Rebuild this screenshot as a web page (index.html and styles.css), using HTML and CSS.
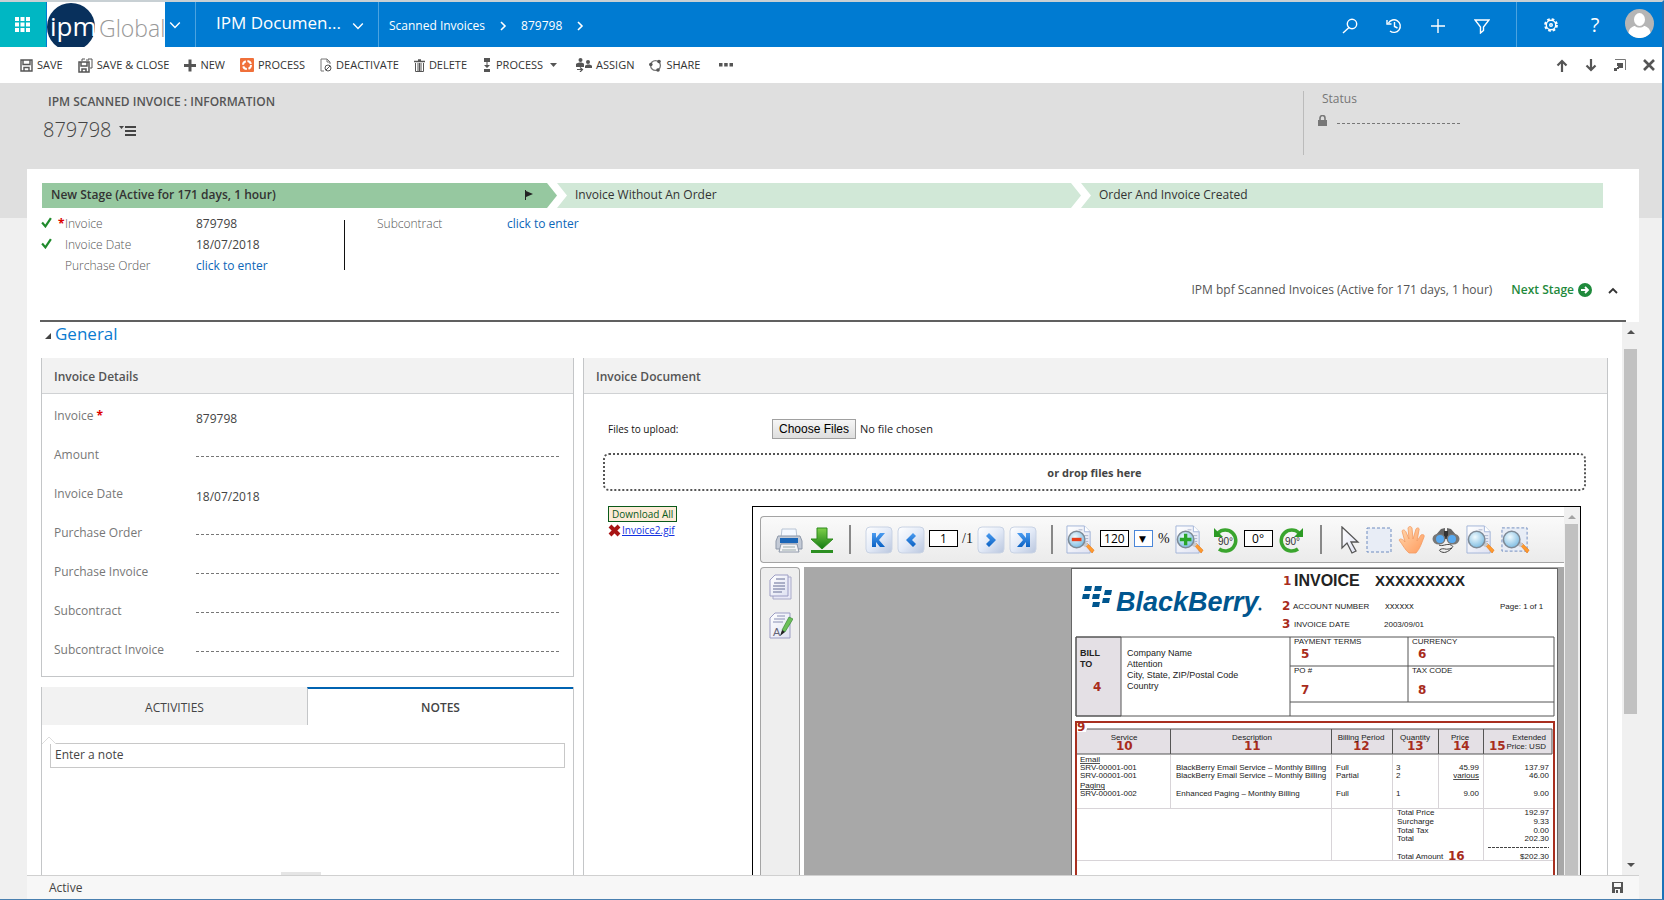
FILE: index.html
```html
<!DOCTYPE html>
<html lang="en">
<head>
<meta charset="utf-8">
<title>IPM Scanned Invoice: 879798</title>
<link rel="stylesheet" href="styles.css">
</head>
<body>
<svg class="defs" aria-hidden="true">
  <defs>
    <linearGradient id="gBtn" x1="0" y1="0" x2="1" y2="1"><stop offset="0" stop-color="#fff"/><stop offset=".5" stop-color="#e3eaf7"/><stop offset="1" stop-color="#b9c6de"/></linearGradient>
    <linearGradient id="gBlue" x1="0" y1="0" x2="0" y2="1"><stop offset="0" stop-color="#4a9bf0"/><stop offset="1" stop-color="#0b62c4"/></linearGradient>
    <linearGradient id="gGreen" x1="0" y1="0" x2="0" y2="1"><stop offset="0" stop-color="#7fd04a"/><stop offset="1" stop-color="#137a13"/></linearGradient>
    <linearGradient id="gPaper" x1="0" y1="0" x2="1" y2="1"><stop offset="0" stop-color="#fff"/><stop offset="1" stop-color="#dfe2f2"/></linearGradient>
    <radialGradient id="gLens" cx=".4" cy=".35" r=".7"><stop offset="0" stop-color="#f0fbff"/><stop offset="1" stop-color="#79b9e0"/></radialGradient>
    <linearGradient id="gHand" x1="0" y1="0" x2="1" y2="1"><stop offset="0" stop-color="#ffd9b0"/><stop offset="1" stop-color="#ff9a5c"/></linearGradient>
    <symbol id="chev-down" viewBox="0 0 10 10"><path d="M1 3l4 4 4-4" fill="none" stroke="currentColor" stroke-width="1.2"/></symbol>
    <symbol id="chev-right" viewBox="0 0 10 10"><path d="M3 1l4 4-4 4" fill="none" stroke="currentColor" stroke-width="1.6"/></symbol>
    <symbol id="navbox" viewBox="0 0 28 28"><rect x="1" y="1" width="26" height="26" rx="4" fill="url(#gBtn)" stroke="#c9d3e4"/></symbol>
    <symbol id="page" viewBox="0 0 30 30"><path d="M1 1h18l6 6v22H1z" fill="url(#gPaper)" stroke="#a3b4d8"/><path d="M19 1v6h6" fill="#fff" stroke="#a3b4d8"/><path d="M13 5h4M19 11h4M20 14h3M20 17h3" stroke="#aab4cc"/></symbol>
    <symbol id="lens" viewBox="0 0 30 30"><path d="M20 21l2-2 7 7-2 3z" fill="#ff9a2e" stroke="#e07010" stroke-width=".6"/><path d="M16 20l4 3 3-3-4-4z" fill="#c8c8cc"/><circle cx="11" cy="15" r="8.5" fill="url(#gLens)" stroke="#7e8a96" stroke-width="1.6"/></symbol>
    <symbol id="check" viewBox="0 0 10 10"><path d="M1 5l3 3.500 5-7.500" fill="none" stroke="#1f8a2c" stroke-width="2"/></symbol>
  </defs>
</svg>

<header class="topbar">
  <button class="waffle" aria-label="Apps"><svg width="15" height="15" viewBox="0 0 15 15"><path d="M0 0h4v4H0zM5.500 0h4v4h-4zM11 0h4v4h-4zM0 5.500h4v4H0zM5.500 5.500h4v4h-4zM11 5.500h4v4h-4zM0 11h4v4H0zM5.500 11h4v4h-4zM11 11h4v4h-4z" fill="#fff"/></svg></button>
  <div class="logo">
    <svg width="118" height="45" viewBox="0 0 118 45" role="img" aria-label="ipm Global">
      <circle cx="24" cy="25" r="24" fill="#08305c"/>
      <text x="3" y="34" class="logo-ipm">ipm</text>
      <text x="52" y="35" class="logo-global">Global</text>
    </svg>
  </div>
  <button class="logo-menu" aria-label="Switch"><svg width="12" height="12"><use href="#chev-down"/></svg></button>
  <button class="area">IPM Documen...<svg width="12" height="12"><use href="#chev-down"/></svg></button>
  <nav class="crumbs">
    <a href="#">Scanned Invoices</a><svg width="10" height="10"><use href="#chev-right"/></svg>
    <a href="#">879798</a><svg width="10" height="10"><use href="#chev-right"/></svg>
  </nav>
  <div class="tools">
    <button aria-label="Search"><svg width="16" height="16" viewBox="0 0 16 16"><circle cx="10" cy="6" r="4.700"/><path d="M7 9.500L1 15"/></svg></button>
    <button aria-label="Recent"><svg width="16" height="16" viewBox="0 0 16 16"><path d="M2.500 5A6.300 6.300 0 1 1 4 13M1 2v4h4.500M8.500 4v4.500l3 1.500"/></svg></button>
    <button aria-label="New"><svg width="16" height="16" viewBox="0 0 16 16"><path d="M8 1v14M1 8h14"/></svg></button>
    <button aria-label="Advanced find"><svg width="16" height="16" viewBox="0 0 16 16"><path d="M1 2h14l-5.500 7v3.500L6.500 15V9z"/></svg></button>
  </div>
  <div class="tools user">
    <button aria-label="Settings"><svg width="16" height="16" viewBox="0 0 16 16"><circle cx="8" cy="8" r="5.800" stroke-width="2.200" stroke-dasharray="2.600 1.955"/><circle cx="8" cy="8" r="4.700"/><circle cx="8" cy="8" r="1.300"/></svg></button>
    <button class="help" aria-label="Help">?</button>
    <button aria-label="Account"><svg class="avatar" width="29" height="29" viewBox="0 0 29 29"><circle cx="14.500" cy="14.500" r="14.500" fill="#b5b5b5"/><ellipse cx="14.500" cy="10.500" rx="5.500" ry="6.500" fill="#fff"/><path d="M3.500 24C4 19 8 17 10 17c2 2 7 2 9 0 2 0 6 2 6.500 7a14.500 14.500 0 0 1-22 0z" fill="#fff"/></svg></button>
  </div>
</header>

<div class="cmdbar">
  <button><svg width="13" height="13" viewBox="0 0 13 13"><path d="M1 1h11v11H1zM3 1v4.500h7V1M4 12V8.500h5V12" fill="none" stroke="#555" stroke-width="1.400"/></svg>SAVE</button>
  <button><svg width="15" height="15" viewBox="0 0 15 15"><path d="M1 4h10v10H1zM3 4v4h6V4M4 14v-3h4v3" fill="none" stroke="#555" stroke-width="1.500"/><path d="M4 3V1h3M10 1h4v9h-2M8 2h3" fill="none" stroke="#555"/></svg>SAVE &amp; CLOSE</button>
  <button><svg width="12" height="13" viewBox="0 0 12 12"><path d="M6 0v12M0 6h12" stroke="#555" stroke-width="3"/></svg>NEW</button>
  <button><svg width="14" height="14" viewBox="0 0 14 14"><rect width="14" height="14" rx="1" fill="#f0703a"/><circle cx="7" cy="7" r="4" fill="none" stroke="#fff" stroke-width="2" stroke-dasharray="4.600 1.680"/></svg>PROCESS</button>
  <button><svg width="12" height="14" viewBox="0 0 12 14"><path d="M4 13H1V1h6l3 3v2M7 1v3h3" fill="none" stroke="#777"/><circle cx="8" cy="10" r="3" fill="none" stroke="#555"/><path d="M6 12l4-4" stroke="#555"/></svg>DEACTIVATE</button>
  <button><svg width="11" height="13" viewBox="0 0 11 13"><path d="M0 2.500h11M4 1h3" stroke="#555" stroke-width="1.500"/><path d="M1.500 4v8.500h8V4M4 4v8M5.500 4v8M7 4v8" fill="none" stroke="#555"/></svg>DELETE</button>
  <button><svg width="10" height="14" viewBox="0 0 10 14"><path d="M2 0h6v4H2zM2 11h6v3H2zM4.500 4h1v3h-1zM2 7h6L5 10z" fill="#555"/></svg>PROCESS<svg class="caret" width="7" height="4" viewBox="0 0 7 4"><path d="M0 0h7L3.500 4z" fill="#555"/></svg></button>
  <button><svg width="16" height="14" viewBox="0 0 16 14"><circle cx="4.500" cy="2" r="2" fill="#555"/><path d="M0 9V6c2-2 7-2 8 0v3z" fill="#555"/><circle cx="12" cy="4" r="2" fill="#555"/><path d="M9 10V8c1-2 6-2 7 0v2z" fill="#555"/><path d="M1 11.500h5M4 9.500l2.500 2L4 14" fill="none" stroke="#555" stroke-width="1.200"/></svg>ASSIGN</button>
  <button><svg width="13" height="13" viewBox="0 0 13 13"><circle cx="6.500" cy="6.500" r="4.900" fill="none" stroke="#777" stroke-width="1.300"/><circle cx="10" cy="2.500" r="1.800" fill="#555"/><circle cx="1.800" cy="5.500" r="1.800" fill="#555"/><circle cx="9" cy="11" r="1.800" fill="#555"/></svg>SHARE</button>
  <button class="more" aria-label="More"><svg width="14" height="4" viewBox="0 0 14 4"><path d="M0 0h3.500v3.500H0zM5.200 0h3.500v3.500H5.200zM10.500 0H14v3.500h-3.500z" fill="#555"/></svg></button>
  <div class="cmd-right">
    <button aria-label="Up"><svg width="12" height="13" viewBox="0 0 12 13"><path d="M6 13V2M1.500 6.500L6 2l4.500 4.500" fill="none" stroke="#555" stroke-width="2.200"/></svg></button>
    <button aria-label="Down"><svg width="12" height="13" viewBox="0 0 12 13"><path d="M6 0v11M1.500 6.500L6 11l4.500-4.500" fill="none" stroke="#555" stroke-width="2.200"/></svg></button>
    <button aria-label="Pop out"><svg width="12" height="12" viewBox="0 0 12 12"><path d="M1 .5h10.500V11" fill="none" stroke="#777"/><path d="M3 4h6v5H4V7H3zM0 9h3v3H0zM3 8h2v2H3z" fill="#555"/></svg></button>
    <button aria-label="Close"><svg width="12" height="12" viewBox="0 0 12 12"><path d="M1 1l10 10M11 1L1 11" stroke="#555" stroke-width="2.600"/></svg></button>
  </div>
</div>

<main class="stage-area">
  <div class="record">
    <div class="record-title">
      <p>IPM SCANNED INVOICE : INFORMATION</p>
      <h1>879798 <svg width="17" height="10" viewBox="0 0 17 10"><path d="M0 0h5L2.500 3zM6 0h11v2H6zM6 4h11v2H6zM6 8h11v2H6z" fill="#444"/></svg></h1>
    </div>
    <div class="record-status">
      <span>Status</span>
      <div><svg width="9" height="11" viewBox="0 0 9 11"><path d="M0 5h9v6H0z" fill="#777"/><path d="M2 5V3a2.500 2.500 0 0 1 5 0v2" fill="none" stroke="#777" stroke-width="1.600"/></svg><i class="dash"></i></div>
    </div>
  </div>

  <div class="panel">
    <section class="process">
      <ol class="stages">
        <li class="first">New Stage (Active for 171 days, 1 hour)<svg width="8" height="10" viewBox="0 0 8 10"><path d="M.5 0v10" stroke="#222"/><path d="M1 1l7 3-7 3z" fill="#222"/></svg></li>
        <li>Invoice Without An Order</li>
        <li class="last">Order And Invoice Created</li>
      </ol>
      <div class="steps">
        <dl>
          <dt><svg width="11" height="11"><use href="#check"/></svg><b>*</b>Invoice</dt><dd>879798</dd>
          <dt><svg width="11" height="11"><use href="#check"/></svg><b></b>Invoice Date</dt><dd>18/07/2018</dd>
          <dt><span></span><b></b>Purchase Order</dt><dd><a href="#">click to enter</a></dd>
        </dl>
        <dl class="second"><dt>Subcontract</dt><dd><a href="#">click to enter</a></dd></dl>
      </div>
      <div class="process-foot">
        <span>IPM bpf Scanned Invoices (Active for 171 days, 1 hour)</span>
        <button class="next">Next Stage<svg width="14" height="14" viewBox="0 0 14 14"><circle cx="7" cy="7" r="7" fill="#1f8a3c"/><path d="M3 7h7M7 4l3 3-3 3" fill="none" stroke="#fff" stroke-width="1.800"/></svg></button>
        <button aria-label="Collapse"><svg width="10" height="7" viewBox="0 0 10 7"><path d="M1 6l4-4 4 4" fill="none" stroke="#333" stroke-width="1.800"/></svg></button>
      </div>
    </section>

    <div class="scroller">
      <div class="content">
        <h2><svg width="6" height="6" viewBox="0 0 6 6"><path d="M6 0v6H0z" fill="#444"/></svg>General</h2>
        <div class="columns">
          <div class="left">
            <section class="card">
              <h3>Invoice Details</h3>
              <dl class="fields">
                <dt>Invoice<b>*</b></dt><dd>879798</dd>
                <dt>Amount</dt><dd><i class="dash"></i></dd>
                <dt>Invoice Date</dt><dd>18/07/2018</dd>
                <dt>Purchase Order</dt><dd><i class="dash"></i></dd>
                <dt>Purchase Invoice</dt><dd><i class="dash"></i></dd>
                <dt>Subcontract</dt><dd><i class="dash"></i></dd>
                <dt>Subcontract Invoice</dt><dd><i class="dash"></i></dd>
              </dl>
            </section>
            <section class="social">
              <div class="tabs"><button>ACTIVITIES</button><button class="on">NOTES</button></div>
              <div class="note-wrap">
                <svg class="tip" width="15" height="8" viewBox="0 0 15 8"><path d="M0 8l7-7 7 7" fill="#fff" stroke="#ddd"/></svg>
                <input class="note" type="text" aria-label="Note" placeholder="Enter a note">
              </div>
              <i class="grip"></i>
            </section>
          </div>

          <section class="card doc">
            <h3>Invoice Document</h3>
            <div class="doc-body">
              <div class="upload"><label for="files">Files to upload:</label><input id="files" type="file" multiple></div>
              <div class="drop">or drop files here</div>
              <div class="doc-row">
                <div class="attachments">
                  <button class="dl-all">Download All</button>
                  <div><svg width="13" height="13" viewBox="0 0 13 13"><path d="M2 2l9 9M11 2l-9 9" stroke="#a81414" stroke-width="4"/></svg><a href="#">Invoice2.gif</a></div>
                </div>
                <div class="viewer">
                  <div class="viewer-main">
                    <div class="vtools">
                      <div class="grp g1">
                        <button aria-label="Print"><svg width="28" height="28" viewBox="0 0 28 28"><path d="M7 3h14l1 9H6z" fill="#f4f8ff" stroke="#b8c4d4"/><path d="M3 10h22l2 5v8H1v-8z" fill="#c3cad6" stroke="#8d97a8"/><path d="M5 12h18v5H5z" fill="#1a66b8"/><path d="M6 18h16l2 8H4z" fill="#f4f4f6" stroke="#8d97a8"/><path d="M8 21h12M7 24h14" stroke="#9aa"/></svg></button>
                        <button aria-label="Download"><svg width="24" height="28" viewBox="0 0 24 28"><path d="M7 2h10v11h6L12 23 1 13h6z" fill="url(#gGreen)" stroke="#2c8a1c"/><path d="M1 24h22v3H1z" fill="#2c8f22"/></svg></button>
                      </div>
                      <div class="grp g2">
                        <button aria-label="First page"><svg width="28" height="28" viewBox="0 0 28 28"><use href="#navbox"/><path d="M7 7v14h4v-5l4 5h5l-6-7 6-7h-5l-4 5V7z" fill="url(#gBlue)"/></svg></button>
                        <button aria-label="Previous page"><svg width="28" height="28" viewBox="0 0 28 28"><use href="#navbox"/><path d="M18 9l-2-2-7 7 7 7 3-3-4-4 4-4z" fill="url(#gBlue)"/></svg></button>
                        <input aria-label="Page" value="1"><span>/1</span>
                        <button aria-label="Next page"><svg width="28" height="28" viewBox="0 0 28 28"><use href="#navbox"/><path d="M9 10l3-3 7 7-7 7-3-3 4-4z" fill="url(#gBlue)"/></svg></button>
                        <button aria-label="Last page"><svg width="28" height="28" viewBox="0 0 28 28"><use href="#navbox"/><path d="M21 7v14h-4v-5l-4 5H8l6-7-6-7h5l4 5V7z" fill="url(#gBlue)"/></svg></button>
                      </div>
                      <div class="grp g3">
                        <button aria-label="Zoom out"><svg width="29" height="29" viewBox="0 0 30 30"><use href="#page"/><use href="#lens"/><path d="M6 15h10" stroke="#e8401c" stroke-width="3.500"/></svg></button>
                        <input aria-label="Zoom" value="120"><select aria-label="Zoom presets"><option>▼</option></select><span>%</span>
                        <button aria-label="Zoom in"><svg width="29" height="29" viewBox="0 0 30 30"><use href="#page"/><use href="#lens"/><path d="M5 15h12M11 9v12" stroke="#2aa52a" stroke-width="3.500"/></svg></button>
                        <button class="rot" aria-label="Rotate left"><svg width="26" height="28" viewBox="0 0 26 28"><path d="M5 7a10.500 10.500 0 1 1 1 16" fill="none" stroke="#3aa52e" stroke-width="3.500"/><path d="M1 2v9h9z" fill="#2c9a24"/><text x="5" y="19">90°</text></svg></button>
                        <input aria-label="Angle" value="0°">
                        <button aria-label="Rotate right"><svg width="26" height="28" viewBox="0 0 26 28"><path d="M21 7a10.500 10.500 0 1 0-1 16" fill="none" stroke="#3aa52e" stroke-width="3.500"/><path d="M25 2v9h-9z" fill="#2c9a24"/><text x="7" y="19">90°</text></svg></button>
                      </div>
                      <div class="grp g4">
                        <button aria-label="Pointer"><svg width="20" height="28" viewBox="0 0 20 28"><path d="M2 1v21l5-5 5 10 4-2-5-9h7z" fill="url(#gPaper)" stroke="#555" stroke-width="1.300"/></svg></button>
                        <button aria-label="Select area"><svg width="26" height="26" viewBox="0 0 26 26"><rect x="1" y="1" width="24" height="24" fill="#e8edf6" stroke="#6f8cc0" stroke-dasharray="3 2"/></svg></button>
                        <button aria-label="Pan"><svg width="28" height="28" viewBox="0 0 28 28"><path d="M11 27c-4-3-6-8-10-13 1-2 4-1 6 2L4 5c1-2 3-1 4 1l3 7-1-11c1-2 3-2 4 0l1 11 3-10c1-2 4-1 3 1l-2 11 4-6c2-1 4 0 3 2-2 5-4 12-8 16z" fill="url(#gHand)" stroke="#f29a62" stroke-width=".8"/></svg></button>
                        <button aria-label="Find"><svg width="28" height="28" viewBox="0 0 28 28"><path d="M3 10l6-7 4-1v9zM25 10l-6-7-4-1v9z" fill="#666"/><path d="M12 5h4v8h-4z" fill="#333"/><ellipse cx="7" cy="13" rx="6.500" ry="5.500" fill="#777"/><circle cx="8" cy="13" r="4" fill="#59aaf0"/><ellipse cx="21" cy="13" rx="6.500" ry="5.500" fill="#777"/><circle cx="20" cy="13" r="4" fill="#59aaf0"/><path d="M7 19c3 2 8-2 12 0 5 2-2 5-6 4-3-1-7 1-5 2 4 3 8 1 12-3" fill="none" stroke="#444"/></svg></button>
                        <button aria-label="Fit page"><svg width="29" height="29" viewBox="0 0 30 30"><use href="#page"/><use href="#lens"/></svg></button>
                        <button aria-label="Fit selection"><svg width="29" height="29" viewBox="0 0 30 30"><rect x="1" y="3" width="26" height="24" fill="#e8edf6" stroke="#6f8cc0" stroke-dasharray="3 2"/><use href="#lens"/></svg></button>
                      </div>
                    </div>
                    <div class="vbody">
                      <div class="vside">
                        <button aria-label="Pages"><svg width="24" height="27" viewBox="0 0 24 27"><path d="M7 3h15v22H4V8" fill="#e8e8f6" stroke="#a9aac8"/><path d="M6 1h13v21H1V6z" fill="url(#gPaper)" stroke="#9c9dc4"/><path d="M7 5h9M5 9h11M4 12h12M4 15h12M4 18h9" stroke="#666f96"/></svg></button>
                        <button aria-label="Annotate"><svg width="24" height="27" viewBox="0 0 24 27"><path d="M6 1h15v25H1V6z" fill="url(#gPaper)" stroke="#9c9dc4"/><path d="M8 4h8M5 7h11M4 10h10" stroke="#8a90b4"/><text x="4" y="24" class="letter">A</text><path d="M13 18l7-13 4 2-8 13z" fill="#6cc05a" stroke="#2c7a2c" stroke-width=".6"/><path d="M13 18l3 2-5 4z" fill="#222"/></svg></button>
                      </div>
                      <div class="canvas">
                        <svg class="sheet" width="487" height="320" viewBox="0 0 487 320" role="img" aria-label="Scanned invoice">
                          <rect x=".5" y=".5" width="486" height="330" fill="#fff" stroke="#666"/>
                          <g fill="#00568f">
                            <path d="M14 18h7l-1 5h-7zM24 18h7l-1 5h-7zM12 26h7l-1 5h-7zM22 26h7l-1 5h-7zM34 22h7l-1 5h-7zM32 30h7l-1 5h-7zM22 34h7l-1 5h-7z"/>
                            <text x="45" y="43" class="bb">BlackBerry</text><circle cx="189" cy="41" r="1.500"/>
                          </g>
                          <g fill="none" stroke="#555">
                            <path d="M5 69h45v79H5z" fill="#e4e0e5"/>
                            <path d="M5 69h478v79H5zM219 69v79M337 69v65M219 98h264M219 134h264"/>
                          </g>
                          <g fill="none" stroke="#d8d4d8"><path d="M99.500 187v53M260.500 187v105M321.500 187v105M367.500 187v53M412.500 187v105M5 240.500h478M5 292.500h478"/></g>
                          <path d="M5 161h476v25H5z" fill="#e4e0e5"/>
                          <path d="M16 161h465v25H5M99.500 161v25M260.500 161v25M321.500 161v25M367.500 161v25M412.500 161v25" fill="none" stroke="#555"/>
                          <path d="M5 325V154h478v171" fill="none" stroke="#a83020" stroke-width="2"/>
                          <path d="M6 155h9v9H6z" fill="#fff"/>
                          <g class="red">
                            <text x="212" y="17">1</text><text x="211" y="42">2</text><text x="211" y="60">3</text><text x="22" y="123">4</text>
                            <text x="230" y="90">5</text><text x="347" y="90">6</text><text x="230" y="126">7</text><text x="347" y="126">8</text>
                            <text x="6" y="163">9</text><text x="45" y="182">10</text><text x="173" y="182">11</text><text x="282" y="182">12</text>
                            <text x="336" y="182">13</text><text x="382" y="182">14</text><text x="418" y="182">15</text><text x="377" y="292">16</text>
                          </g>
                          <text x="223" y="18" class="inv">INVOICE</text><text x="304" y="18" class="inv x">XXXXXXXXX</text>
                          <g class="s8">
                            <text x="222" y="41">ACCOUNT NUMBER</text><text x="314" y="41" class="serif">XXXXXX</text><text x="429" y="41">Page: 1 of 1</text>
                            <text x="223" y="59">INVOICE DATE</text><text x="313" y="59">2003/09/01</text>
                            <text x="223" y="76">PAYMENT TERMS</text><text x="341" y="76">CURRENCY</text><text x="223" y="105">PO #</text><text x="341" y="105">TAX CODE</text>
                            <text x="53" y="172" text-anchor="middle">Service</text><text x="181" y="172" text-anchor="middle">Description</text><text x="290" y="172" text-anchor="middle">Billing Period</text><text x="344" y="172" text-anchor="middle">Quantity</text><text x="389" y="172" text-anchor="middle">Price</text><text x="475" y="172" text-anchor="end">Extended</text><text x="475" y="181" text-anchor="end">Price: USD</text>
                            <text x="9" y="194" class="u">Email</text><text x="9" y="202">SRV-00001-001</text><text x="9" y="210">SRV-00001-001</text><text x="9" y="220" class="u">Paging</text><text x="9" y="228">SRV-00001-002</text>
                            <text x="105" y="202">BlackBerry Email Service – Monthly Billing</text><text x="105" y="210">BlackBerry Email Service – Monthly Billing</text><text x="105" y="228">Enhanced Paging – Monthly Billing</text>
                            <text x="265" y="202">Full</text><text x="265" y="210">Partial</text><text x="265" y="228">Full</text>
                            <text x="325" y="202">3</text><text x="325" y="210">2</text><text x="325" y="228">1</text>
                            <g text-anchor="end"><text x="408" y="202">45.99</text><text x="408" y="210" class="u g">various</text><text x="408" y="228">9.00</text>
                            <text x="478" y="202">137.97</text><text x="478" y="210">46.00</text><text x="478" y="228">9.00</text><text x="478" y="247">192.97</text><text x="478" y="256">9.33</text><text x="478" y="265">0.00</text><text x="478" y="273">202.30</text><text x="478" y="291">$202.30</text></g>
                            <text x="326" y="247">Total Price</text><text x="326" y="256">Surcharge</text><text x="326" y="265">Total Tax</text><text x="326" y="273">Total</text><text x="326" y="291">Total Amount</text>
                          </g>
                          <path d="M417 279.500h61" stroke="#444" stroke-dasharray="3 1"/>
                          <g class="s9"><text x="9" y="88" class="b">BILL</text><text x="9" y="99" class="b">TO</text><text x="56" y="88">Company Name</text><text x="56" y="99">Attention</text><text x="56" y="110">City, State, ZIP/Postal Code</text><text x="56" y="121">Country</text></g>
                        </svg>
                      </div>
                    </div>
                  </div>
                  <div class="vscroll"><svg width="8" height="4" viewBox="0 0 8 4"><path d="M0 4l4-4 4 4z" fill="#a3a3a3"/></svg><i></i></div>
                </div>
              </div>
            </div>
          </section>
        </div>
      </div>
      <div class="scrollbar"><svg width="8" height="4" viewBox="0 0 8 4"><path d="M0 4l4-4 4 4z" fill="#505050"/></svg><div><i></i></div><svg width="8" height="4" viewBox="0 0 8 4"><path d="M0 0h8L4 4z" fill="#505050"/></svg></div>
    </div>
    <footer class="statusbar"><span>Active</span><button aria-label="Save"><svg width="11" height="11" viewBox="0 0 11 11"><path d="M0 0h11v11H0z" fill="#555"/><path d="M2 1h7v4H2zM3 7h5v4H3z" fill="#f7f7f7"/><path d="M4 8h2v3H4z" fill="#555"/></svg></button></footer>
  </div>
</main>
</body>
</html>
```

FILE: styles.css
```css
* { box-sizing: border-box; }
html, body { height: 100%; }
body {
  margin: 0; display: flex; flex-direction: column; overflow: hidden;
  font: 12px/16px "Open Sans", "Noto Sans", sans-serif; color: #444;
  background: #f0f0f0; border-top: 2px solid #c8d0d4; border-right: 2px solid #1a72b8; border-bottom: 1px solid #4a80b0;
}
button { font: inherit; color: inherit; background: none; border: 0; padding: 0; display: flex; align-items: center; }
svg { display: block; flex: none; }
a { color: #0c66b8; text-decoration: none; }
h1, h2, h3, p, ol, dl, dd { margin: 0; padding: 0; }
.defs { position: absolute; width: 0; height: 0; }

.topbar { display: flex; flex: none; height: 45px; background: #007bd2; color: #fff; }
.waffle { width: 47px; padding-right: 2px; justify-content: center; background: #00b7c3; border-right: 1px solid #007bd2; }
.logo { width: 118px; background: #fff; }
.logo-ipm { font: 26px "Open Sans", sans-serif; fill: #fff; }
.logo-global { font: 300 23px "Open Sans", sans-serif; fill: #999; }
.logo-menu { width: 31px; padding-left: 4px; border-right: 1px solid #4ba3e0; }
.area { width: 183px; padding: 0 14px 4px 20px; justify-content: space-between; font-size: 17px; border-right: 1px solid #4ba3e0; }
.area svg { margin-top: 6px; }
.crumbs { display: flex; align-items: center; gap: 13px; padding: 2px 0 0 10px; flex: 1; }
.crumbs a { color: #fff; }
.tools { display: flex; align-items: center; gap: 28px; padding: 2px 26px 0 0; }
.tools svg { fill: none; stroke: #fff; stroke-width: 1.4; }
.tools .avatar { stroke: none; }
.user { border-left: 1px solid #4ba3e0; padding: 0 8px 0 26px; }
.help { font-size: 20px; width: 16px; justify-content: center; }
.user button:last-child { margin: 0 0 2px -6px; }

.cmdbar { display: flex; flex: none; align-items: center; height: 36px; gap: 15px; padding: 0 7px 0 20px; background: #fff; font-size: 11px; color: #333; }
.cmdbar button { gap: 4px; }
.cmdbar .caret { margin: 0 4px 0 3px; }
.cmdbar .more { margin-left: 4px; }
.cmd-right { display: flex; gap: 17px; margin-left: auto; }

.stage-area { flex: 1; min-height: 0; display: flex; flex-direction: column; padding: 0 23px 0 27px; background: linear-gradient(#dfdfdf 135px, #f0f0f0 135px); }
.record { display: flex; flex: none; justify-content: space-between; height: 86px; padding: 8px 0 14px; }
.record-title { padding-left: 16px; }
.record-title p { padding: 3px 0 0 5px; font-weight: 600; color: #555; }
.record-title h1 { display: flex; align-items: center; gap: 7px; margin-top: 7px; font-size: 20px; line-height: 26px; font-weight: 300; }
.record-title svg { margin-top: 2px; }
.record-status { width: 336px; padding-left: 14px; border-left: 1px solid #bbb; color: #777; }
.record-status span { padding-left: 4px; }
.record-status div { display: flex; align-items: center; gap: 10px; margin-top: 8px; }
.record-status .dash { width: 125px; margin-top: 6px; }
.dash { display: block; height: 1px; background: repeating-linear-gradient(90deg, #777 0 3px, transparent 3px 5px); }

.panel { flex: 1; min-height: 0; display: flex; flex-direction: column; background: #fff; }
.process { flex: none; margin: 0 13px; padding-top: 14px; height: 153px; border-bottom: 2px solid #606060; }
.stages { display: grid; grid-template-columns: 515fr 524fr 522fr; margin: 0 23px 0 2px; list-style: none; }
.stages li { height: 25px; padding: 0 24px 2px 18px; display: flex; align-items: center; justify-content: space-between; background: #d1e8d7; color: #333;
  clip-path: polygon(0 0, calc(100% - 10px) 0, 100% 50%, calc(100% - 10px) 100%, 0 100%, 10px 50%); }
.stages .first { padding-left: 9px; background: #96c8a0; font-weight: 600; clip-path: polygon(0 0, calc(100% - 10px) 0, 100% 50%, calc(100% - 10px) 100%, 0 100%); }
.stages .last { clip-path: polygon(0 0, 100% 0, 100% 100%, 0 100%, 10px 50%); }
.steps { display: flex; height: 74px; padding: 8px 0 0 1px; }
.steps dl { display: grid; grid-template-columns: 155px 1fr; grid-auto-rows: 21px; width: 303px; }
.steps dt { display: flex; color: #555; font-weight: 300; }
.steps dt > svg, .steps dt > span { width: 11px; margin-top: 1px; }
.steps dt b { width: 13px; padding-left: 6px; }
b { color: #d00; font-weight: 700; }
.steps .second { grid-template-columns: 130px 1fr; margin-top: 4px; height: 50px; padding-left: 32px; border-left: 1px solid #111; }
.steps .second > * { margin-top: -4px; }
.process-foot { display: flex; align-items: center; justify-content: flex-end; gap: 19px; padding-right: 8px; color: #555; }
.process-foot .next { gap: 4px; margin-right: -3px; color: #1f8a3c; font-weight: 600; }

.scroller { flex: 1; min-height: 0; display: flex; }
.content { flex: 1; overflow: hidden; padding: 0 14px 0 14px; display: flex; flex-direction: column; }
.content h2 { display: flex; flex: none; align-items: center; gap: 4px; height: 36px; padding: 0 0 13px 4px; color: #0a7bd0; font-size: 17px; font-weight: 400; }
.content h2 svg { margin-top: 5px; }
.columns { flex: 1; min-height: 0; display: grid; grid-template-columns: 533fr 1025fr; grid-template-rows: minmax(0, 1fr); gap: 9px; }
.left { display: flex; flex-direction: column; min-height: 0; }
.card { flex: none; border: 1px solid #c4c6c8; border-top: 0; }
.card h3 { height: 36px; padding: 11px 12px 0; background: #f2f2f2; border-bottom: 1px solid #d0d2d4; font-size: 12px; font-weight: 600; color: #555; }
.fields { display: grid; grid-template-columns: 142px 1fr; grid-auto-rows: 39px; padding: 9px 13px 0 12px; height: 282px; color: #777; }
.fields dt { padding-top: 5px; }
.fields dt b { margin-left: 3px; }
.fields dd { padding-top: 8px; color: #444; }
.fields .dash { margin-top: 6px; }
.social { flex: 1; display: flex; flex-direction: column; min-height: 0; margin-top: 10px; border: solid #c4c6c8; border-width: 0 1px; }
.tabs { display: flex; height: 38px; flex: none; }
.tabs button { flex: 1; justify-content: center; padding-top: 4px; background: #f2f2f2; }
.tabs .on { background: #fff; border-top: 2px solid #0063b1; border-left: 1px solid #c4c6c8; font-weight: 600; padding-top: 2px; }
.note-wrap { position: relative; padding: 18px 8px 0; }
.tip { position: absolute; left: 0; top: 11px; z-index: 1; }
.note { display: block; width: 100%; height: 25px; border: 1px solid #c8c8c8; padding: 0 4px 2px; font: inherit; }
.note::placeholder { color: #444; opacity: 1; }
.grip { width: 40px; height: 3px; margin: auto auto 0 45%; background: #e5e5e5; }

.doc { display: flex; flex-direction: column; border-bottom: 0; min-height: 0; }
.doc h3 { flex: none; }
.doc-body { flex: 1; min-height: 0; display: flex; flex-direction: column; padding: 25px 21px 0 19px; font-size: 11px; color: #111; }
.upload { display: flex; align-items: center; flex: none; height: 20px; padding-left: 5px; }
.upload label { width: 164px; font-size: 10px; }
.upload input { font: 11px "Open Sans", sans-serif; color: #222; }
.upload input::file-selector-button { font: 12px "Liberation Sans", sans-serif; height: 20px; padding: 0 6px; margin-right: 4px; border: 1px solid #a0a0a0; background: linear-gradient(#f6f6f6, #dedede); }
.drop { flex: none; height: 38px; margin-top: 14px; padding-top: 2px; border: 2px dotted #555; border-radius: 6px; display: flex; align-items: center; justify-content: center; font-weight: 700; color: #444; }
.doc-row { flex: 1; min-height: 0; display: flex; padding: 15px 5px 0 5px; }
.attachments { width: 144px; flex: none; }
.attachments a { color: #1030e0; text-decoration: underline; font-size: 10px; }
.attachments div { display: flex; align-items: center; gap: 1px; }
.dl-all { height: 16px; padding: 0 3px; border: 1px solid #0a5a1a; background: #fdebd8; color: #0a5a1a; font-size: 10px; }
.viewer { flex: 1; min-width: 0; display: flex; border: 1px solid #000; border-bottom: 0; overflow: hidden; }
.viewer-main { flex: 1; min-width: 0; display: flex; flex-direction: column; padding: 9px 0 0 7px; }
.vtools { display: flex; align-items: center; flex: none; height: 47px; border: 1px solid #a4a4a4; border-right: 0; border-radius: 4px 0 0 4px; background: linear-gradient(#fafafa, #ebebeb); padding: 0 0 0 14px; }
.grp { display: flex; align-items: center; gap: 4px; height: 29px; font: 14px "Liberation Serif", serif; }
.g2, .g3, .g4 { border-left: 2px solid #888; }
.g1 { gap: 7px; padding-right: 15px; }
.g2 { padding: 0 14px 0 14px; }
.g3 { gap: 5px; padding: 0 16px 0 13px; }
.g4 { gap: 7px; padding-left: 18px; }
.grp input, .grp select, .grp span { margin-bottom: 2px; }
.grp .rot { margin-left: 4px; }
.grp input { width: 29px; height: 17px; border: 1px solid #000; padding: 0; text-align: center; font: 12px "Open Sans", sans-serif; background: #fff; }
.grp select { appearance: none; width: 19px; height: 17px; padding: 0 4px; border: 1px solid #4a86d8; background: #fff; font: 9px "DejaVu Sans", sans-serif; color: #000; }
.grp text { font: 10px "Liberation Sans", sans-serif; fill: #333; }
.vbody { flex: 1; min-height: 0; display: flex; gap: 4px; margin-top: 4px; }
.vside { width: 40px; padding: 6px 8px; border: 1px solid #a4a4a4; border-bottom: 0; border-radius: 4px 4px 0 0; background: #eee; display: flex; flex-direction: column; gap: 11px; }
.letter { font: 11px "Liberation Sans", sans-serif; fill: #667; }
.canvas { flex: 1; min-width: 0; overflow: hidden; background: #a8a8a8; padding-top: 1px; }
.sheet { margin: 0 6px 0 auto; font-family: "Liberation Sans", Arial, sans-serif; fill: #222; }
.g4 button + button { margin-left: -1px; }
.bb { font: italic 700 27px "Liberation Sans", sans-serif; }
.red { font: 700 12px "DejaVu Sans", sans-serif; fill: #a82c1c; }
.inv { font-size: 16px; font-weight: 700; }
.inv.x { font-size: 15px; }
.s8 { font-size: 8px; }
.s9 { font-size: 9px; }
.serif { font-family: "Liberation Mono", monospace; }
.b { font-weight: 700; }
.u { text-decoration: underline; }
.g { text-decoration-color: #3a3; }
.vscroll { width: 16px; padding: 8px 2px 0 1px; background: #f0f0f0; display: flex; flex-direction: column; align-items: center; }
.vscroll i { flex: 1; width: 13px; margin-top: 5px; background: #c1c1c1; }
.scrollbar { width: 17px; padding: 8px 2px; background: #f0f0f0; display: flex; flex-direction: column; align-items: center; }
.scrollbar div { flex: 1; width: 13px; padding-top: 15px; }
.scrollbar i { display: block; height: 71%; background: #c1c1c1; }
.statusbar { flex: none; height: 24px; display: flex; align-items: center; justify-content: space-between; padding: 0 16px 0 22px; background: #f7f7f7; border-top: 1px solid #d0d0d0; }
```
